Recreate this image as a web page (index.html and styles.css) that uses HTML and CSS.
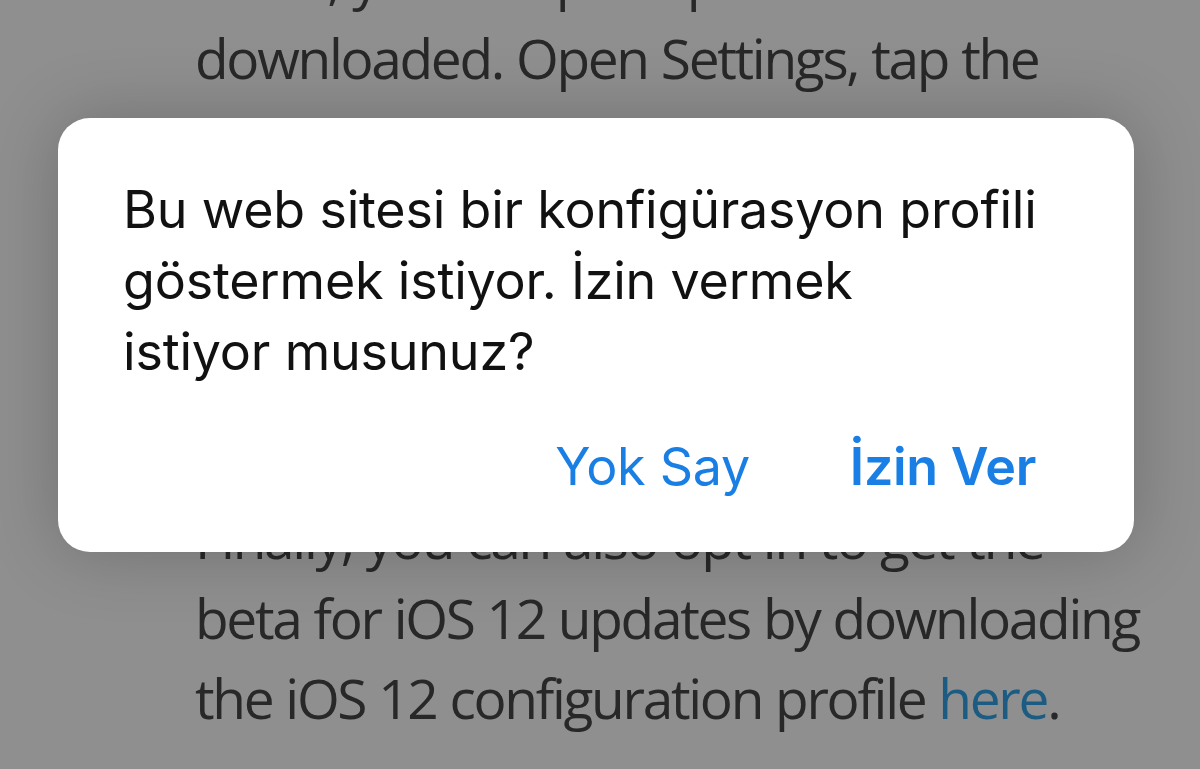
FILE: index.html
```html
<!DOCTYPE html>
<html lang="tr">
<head>
<meta charset="utf-8">
<title>Profil</title>
<link rel="stylesheet" href="styles.css">
</head>
<body>
<main class="article">
  <p class="line">Safari, you’ll be prompted that it was</p>
  <p class="line">downloaded. Open Settings, tap the</p>
  <p class="line">you can run now, so a menu can</p>
  <p class="line">tap Install in the upper right corner to</p>
  <p class="line">finish. Restart your device and then</p>
  <p class="line">go to Software Update to get the beta.</p>
  <p class="line">Readers can also sign up to get public</p>
  <p class="line">Finally, you can also opt in to get the</p>
  <p class="line">beta for iOS 12 updates by downloading</p>
  <p class="line">the iOS 12 configuration profile <a class="link" href="#">here</a>.</p>
</main>
<div class="overlay">
  <section class="alert" role="alertdialog">
    <p class="message">Bu web sitesi bir konfigürasyon profili<br>göstermek istiyor. İzin vermek<br>istiyor musunuz?</p>
    <div class="actions">
      <button class="action">Yok Say</button>
      <button class="action primary">İzin Ver</button>
    </div>
  </section>
</div>
</body>
</html>
```

FILE: styles.css
```css
html, body {
  margin: 0;
  padding: 0;
  width: 1200px;
  height: 769px;
  overflow: hidden;
}
body {
  background: #8f8f8f;
  position: relative;
}
.article {
  padding-left: 195px;
  margin-top: -62px;
  font-family: "Open Sans", "Liberation Sans", sans-serif;
  font-size: 55px;
  letter-spacing: -2.3px;
  word-spacing: 1px;
  color: #282828;
  overflow: hidden;
}
.line {
  margin: 0;
  height: 80px;
  line-height: 80px;
  white-space: nowrap;
}
.link {
  color: #1c5c82;
  text-decoration: none;
}
.overlay {
  position: absolute;
  inset: 0;
}
.alert {
  position: absolute;
  left: 58px;
  top: 118px;
  width: 1076px;
  height: 434px;
  box-sizing: border-box;
  background: #ffffff;
  border-radius: 32px;
  box-shadow: 0 0 70px rgba(0, 0, 0, 0.22);
  padding: 56px 60px 0 65px;
  display: flex;
  flex-direction: column;
  font-family: Inter, "Roboto", sans-serif;
}
.message {
  margin: 0;
  font-size: 52px;
  line-height: 71px;
  color: #111111;
  letter-spacing: -0.2px;
  white-space: nowrap;
}
.actions {
  display: flex;
  justify-content: flex-end;
  gap: 100px;
  margin-top: 50px;
  padding-right: 38px;
}
.action {
  border: 0;
  background: none;
  padding: 0;
  font-family: Inter, "Roboto", sans-serif;
  font-size: 52px;
  line-height: 60px;
  color: #1a7fe4;
  font-weight: 400;
  letter-spacing: -0.3px;
}
.action.primary {
  font-weight: 600;
}
```
